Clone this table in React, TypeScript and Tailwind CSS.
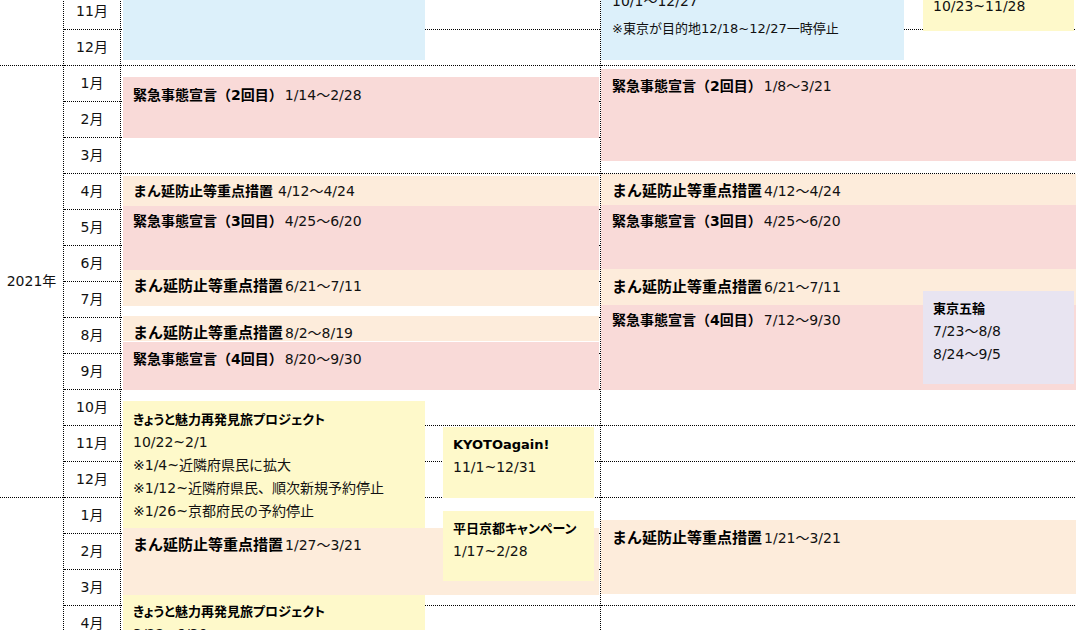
import type { ReactNode } from "react";

// 表示している月（2020年7月〜2022年12月）
const months = [7, 8, 9, 10, 11, 12, 1, 2, 3, 4, 5, 6, 7, 8, 9, 10, 11, 12, 1, 2, 3, 4, 5, 6, 7, 8, 9, 10, 11, 12];

function RowLines() {
  return (
    <div className="col-start-1 row-start-1 flex flex-col">
      {months.map((_, i) => (
        <div key={i} className="h-[36px] shrink-0 border-b border-dotted border-black" />
      ))}
    </div>
  );
}

function Bar({ cls, children }: { cls: string; children?: ReactNode }) {
  return <div className={"col-start-1 self-start justify-self-start whitespace-nowrap " + cls}>{children}</div>;
}

function Head({ t, d, big, space }: { t: string; d: string; big?: boolean; space?: boolean }) {
  return (
    <div>
      <span className={big ? "text-[15px] font-bold text-black" : "text-[14px] font-bold text-black"}>{t}</span>
      <span className={space ? "ml-[5px]" : "ml-[2px]"}>{d}</span>
    </div>
  );
}

function Title({ t }: { t: string }) {
  return <div className="text-[13px] font-bold text-black [font-feature-settings:'palt']">{t}</div>;
}

export default function App() {
  return (
    <div className="h-[630px] w-[1076px] overflow-hidden bg-white text-[14px] leading-[23px] text-[#111] [font-family:'DejaVu_Sans','Noto_Sans_CJK_JP',sans-serif]">
      <div className="-mt-[150px] flex">
        {/* 年 */}
        <div className="flex w-[64px] shrink-0 flex-col border-r border-dotted border-black">
          <div className="flex h-[216px] shrink-0 items-center justify-center border-b border-dotted border-black">2020年</div>
          <div className="flex h-[432px] shrink-0 items-center justify-center border-b border-dotted border-black">2021年</div>
          <div className="flex h-[432px] shrink-0 items-center justify-center border-b border-dotted border-black">2022年</div>
        </div>

        {/* 月 */}
        <div className="flex w-[57px] shrink-0 flex-col border-r border-dotted border-black">
          {months.map((m, i) => (
            <div key={i} className="flex h-[36px] shrink-0 items-center justify-center border-b border-dotted border-black">
              {m}月
            </div>
          ))}
        </div>

        {/* 京都 */}
        <div className="grid w-[480px] shrink-0 border-r border-dotted border-black">
          <RowLines />
          <div className="col-start-1 row-start-1 grid grid-cols-1 grid-rows-[repeat(30,36px)]">
            <Bar cls="row-start-1 mt-[25px] ml-[2px] h-[185px] w-[302px] bg-[#dcf0fa] pl-[10px] pt-[7px]">
              <Title t="GoToトラベル" />
              <div>7/22~12/27</div>
            </Bar>
            <Bar cls="row-start-7 mt-[11px] ml-[2px] h-[61px] w-[476px] bg-[#f9dad8] pl-[10px] pt-[7px]">
              <Head t="緊急事態宣言（2回目）" d="1/14～2/28" />
            </Bar>
            <Bar cls="row-start-10 mt-[2px] ml-[2px] h-[30px] w-[476px] bg-[#fdecdb] pl-[10px] pt-[4px]">
              <Head t="まん延防止等重点措置" d="4/12～4/24" space />
            </Bar>
            <Bar cls="row-start-10 mt-[32px] ml-[2px] h-[64px] w-[476px] bg-[#f9dad8] pl-[10px] pt-[4px]">
              <Head t="緊急事態宣言（3回目）" d="4/25～6/20" />
            </Bar>
            <Bar cls="row-start-12 mt-[24px] ml-[2px] h-[36px] w-[476px] bg-[#fdecdb] pl-[10px] pt-[5px]">
              <Head t="まん延防止等重点措置" d="6/21～7/11" big />
            </Bar>
            <Bar cls="row-start-13 mt-[34px] ml-[2px] h-[25px] w-[476px] bg-[#fdecdb] pl-[10px] pt-[6px]">
              <Head t="まん延防止等重点措置" d="8/2～8/19" big />
            </Bar>
            <Bar cls="row-start-14 mt-[24px] ml-[2px] h-[48px] w-[476px] bg-[#f9dad8] pl-[10px] pt-[6px]">
              <Head t="緊急事態宣言（4回目）" d="8/20～9/30" />
            </Bar>
            <Bar cls="row-start-16 mt-[11px] ml-[2px] h-[127px] w-[302px] bg-[#fef9ca] pl-[10px] pt-[7px]">
              <Title t="きょうと魅力再発見旅プロジェクト" />
              <div>10/22~2/1</div>
              <div>※1/4~近隣府県民に拡大</div>
              <div>※1/12~近隣府県民、順次新規予約停止</div>
              <div>※1/26~京都府民の予約停止</div>
            </Bar>
            <Bar cls="row-start-17 mt-[1px] ml-[322px] h-[71px] w-[151px] bg-[#fef9ca] pl-[10px] pt-[6px]">
              <Title t="KYOTOagain!" />
              <div>11/1~12/31</div>
            </Bar>
            <Bar cls="row-start-19 mt-[30px] ml-[2px] h-[67px] w-[476px] bg-[#fdecdb] pl-[10px] pt-[6px]">
              <Head t="まん延防止等重点措置" d="1/27～3/21" big />
            </Bar>
            <Bar cls="row-start-19 mt-[13px] ml-[322px] h-[70px] w-[151px] bg-[#fef9ca] pl-[10px] pt-[6px]">
              <Title t="平日京都キャンペーン" />
              <div>1/17~2/28</div>
            </Bar>
            <Bar cls="row-start-21 mt-[25px] ml-[2px] h-[120px] w-[302px] bg-[#fef9ca] pl-[10px] pt-[5px]">
              <Title t="きょうと魅力再発見旅プロジェクト" />
              <div>3/22~6/30</div>
            </Bar>
          </div>
        </div>

        {/* 東京 */}
        <div className="grid w-[480px] shrink-0">
          <RowLines />
          <div className="col-start-1 row-start-1 grid grid-cols-1 grid-rows-[repeat(30,36px)]">
            <Bar cls="row-start-4 mt-[2px] h-[100px] w-[303px] bg-[#dcf0fa] pl-[11px] pt-[7px]">
              <Title t="GoToトラベル（東京追加）" />
              <div>10/1～12/27</div>
              <div className="mt-[4px] text-[13px]">※東京が目的地12/18~12/27一時停止</div>
            </Bar>
            <Bar cls="row-start-4 mt-[7px] ml-[322px] h-[66px] w-[151px] bg-[#fef9ca] pl-[10px] pt-[7px]">
              <Title t="GoToイート" />
              <div>10/23~11/28</div>
            </Bar>
            <Bar cls="row-start-7 mt-[3px] h-[92px] w-[479px] bg-[#f9dad8] pl-[11px] pt-[6px]">
              <Head t="緊急事態宣言（2回目）" d="1/8～3/21" />
            </Bar>
            <Bar cls="row-start-10 h-[31px] w-[479px] bg-[#fdecdb] pl-[11px] pt-[6px]">
              <Head t="まん延防止等重点措置" d="4/12～4/24" big />
            </Bar>
            <Bar cls="row-start-10 mt-[31px] h-[64px] w-[479px] bg-[#f9dad8] pl-[11px] pt-[5px]">
              <Head t="緊急事態宣言（3回目）" d="4/25～6/20" />
            </Bar>
            <Bar cls="row-start-12 mt-[23px] h-[36px] w-[479px] bg-[#fdecdb] pl-[11px] pt-[7px]">
              <Head t="まん延防止等重点措置" d="6/21～7/11" big />
            </Bar>
            <Bar cls="row-start-13 mt-[23px] h-[85px] w-[479px] bg-[#f9dad8] pl-[11px] pt-[4px]">
              <Head t="緊急事態宣言（4回目）" d="7/12～9/30" />
            </Bar>
            <Bar cls="row-start-13 mt-[9px] ml-[322px] h-[93px] w-[151px] bg-[#e8e4f1] pl-[10px] pt-[6px]">
              <Title t="東京五輪" />
              <div>7/23～8/8</div>
              <div>8/24～9/5</div>
            </Bar>
            <Bar cls="row-start-19 mt-[22px] h-[74px] w-[479px] bg-[#fdecdb] pl-[11px] pt-[7px]">
              <Head t="まん延防止等重点措置" d="1/21～3/21" big />
            </Bar>
          </div>
        </div>
      </div>
    </div>
  );
}
